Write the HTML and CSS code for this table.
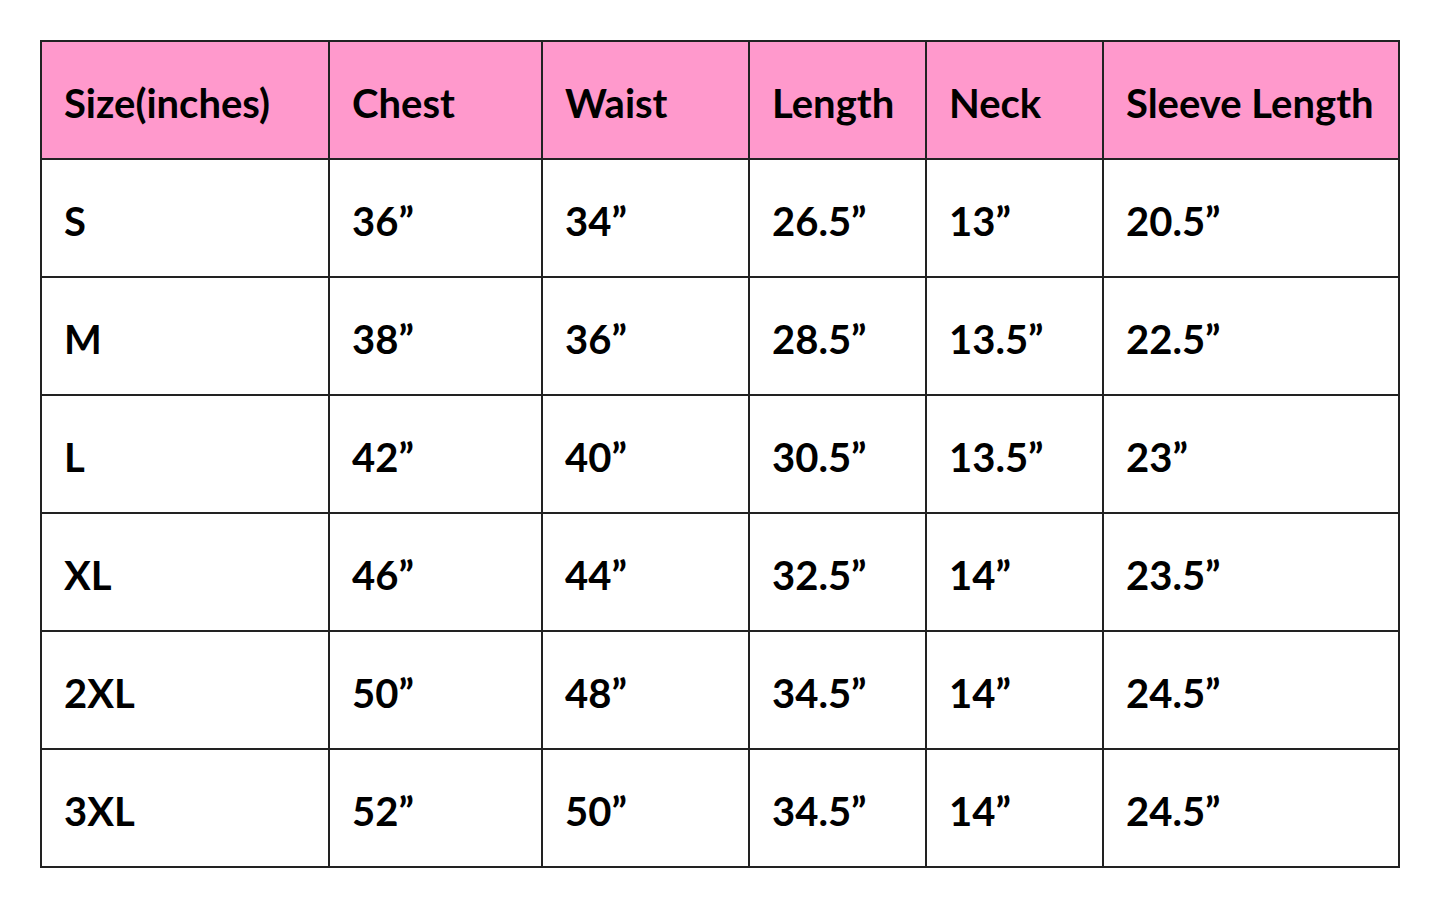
FILE: index.html
```html
<!DOCTYPE html>
<html>
<head>
<meta charset="utf-8">
<link rel="stylesheet" href="styles.css">
</head>
<body>
<table class="size-chart">
<colgroup>
<col class="c1"><col class="c2"><col class="c3"><col class="c4"><col class="c5"><col class="c6">
</colgroup>
<thead>
<tr><th>Size(inches)</th><th>Chest</th><th>Waist</th><th>Length</th><th>Neck</th><th>Sleeve Length</th></tr>
</thead>
<tbody>
<tr><td>S</td><td>36”</td><td>34”</td><td>26.5”</td><td>13”</td><td>20.5”</td></tr>
<tr><td>M</td><td>38”</td><td>36”</td><td>28.5”</td><td>13.5”</td><td>22.5”</td></tr>
<tr><td>L</td><td>42”</td><td>40”</td><td>30.5”</td><td>13.5”</td><td>23”</td></tr>
<tr><td>XL</td><td>46”</td><td>44”</td><td>32.5”</td><td>14”</td><td>23.5”</td></tr>
<tr><td>2XL</td><td>50”</td><td>48”</td><td>34.5”</td><td>14”</td><td>24.5”</td></tr>
<tr><td>3XL</td><td>52”</td><td>50”</td><td>34.5”</td><td>14”</td><td>24.5”</td></tr>
</tbody>
</table>
</body>
</html>
```
FILE: styles.css
```css
html, body {
  margin: 0;
  padding: 0;
  background: #ffffff;
}
body {
  padding: 40px 0 0 40px;
  font-family: Lato, "Liberation Sans", sans-serif;
}
.size-chart {
  border-collapse: collapse;
  table-layout: fixed;
  width: 1358px;
}
.c1 { width: 288px; }
.c2 { width: 213px; }
.c3 { width: 207px; }
.c4 { width: 177px; }
.c5 { width: 177px; }
.c6 { width: 296px; }
.size-chart th,
.size-chart td {
  border: 2px solid #222222;
  height: 110px;
  padding: 6px 0 0 22px;
  text-align: left;
  vertical-align: middle;
  font-weight: 700;
  font-size: 40px;
  color: #000000;
  white-space: nowrap;
}
.size-chart th {
  background: #ff99cc;
}
```
